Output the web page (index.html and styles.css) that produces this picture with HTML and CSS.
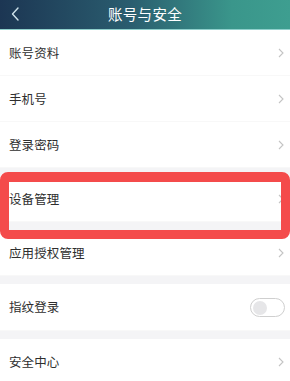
FILE: index.html
```html
<!DOCTYPE html>
<html lang="zh-CN">
<head>
<meta charset="utf-8">
<title>账号与安全</title>
<link rel="stylesheet" href="styles.css">
</head>
<body>
<div class="page">
  <header class="topbar">
    <svg class="back" width="8" height="14" viewBox="0 0 8 14"><path d="M7 1 L1.5 7 L7 13" fill="none" stroke="#cfe3ea" stroke-width="1.4" stroke-linecap="round" stroke-linejoin="round"/></svg>
    <h1 class="title">账号与安全</h1>
  </header>

  <section class="group">
    <div class="row"><span class="label">账号资料</span><svg class="chev" width="6" height="10" viewBox="0 0 6 10"><path d="M1 1 L5 5 L1 9" fill="none" stroke="#c4c4c4" stroke-width="1.1"/></svg></div>
    <div class="row"><span class="label">手机号</span><svg class="chev" width="6" height="10" viewBox="0 0 6 10"><path d="M1 1 L5 5 L1 9" fill="none" stroke="#c4c4c4" stroke-width="1.1"/></svg></div>
    <div class="row"><span class="label">登录密码</span><svg class="chev" width="6" height="10" viewBox="0 0 6 10"><path d="M1 1 L5 5 L1 9" fill="none" stroke="#c4c4c4" stroke-width="1.1"/></svg></div>
  </section>

  <section class="group">
    <div class="row"><span class="label">设备管理</span><svg class="chev" width="6" height="10" viewBox="0 0 6 10"><path d="M1 1 L5 5 L1 9" fill="none" stroke="#c4c4c4" stroke-width="1.1"/></svg></div>
  </section>

  <section class="group">
    <div class="row"><span class="label">应用授权管理</span><svg class="chev" width="6" height="10" viewBox="0 0 6 10"><path d="M1 1 L5 5 L1 9" fill="none" stroke="#c4c4c4" stroke-width="1.1"/></svg></div>
  </section>

  <section class="group">
    <div class="row tall"><span class="label">指纹登录</span><span class="toggle"><span class="knob"></span></span></div>
  </section>

  <section class="group last">
    <div class="row"><span class="label">安全中心</span><svg class="chev" width="6" height="10" viewBox="0 0 6 10"><path d="M1 1 L5 5 L1 9" fill="none" stroke="#c4c4c4" stroke-width="1.1"/></svg></div>
  </section>

  <div class="highlight"></div>
</div>
</body>
</html>
```

FILE: styles.css
```css
html, body {
  margin: 0;
  padding: 0;
  background: #f4f4f6;
}
body {
  font-family: "Noto Sans CJK SC", "Noto Sans", sans-serif;
  color: #2e2e2e;
  overflow: hidden;
}
.page {
  position: relative;
  width: 290px;
  height: 381px;
  overflow: hidden;
}
.topbar {
  height: 29px;
  border-bottom: 1px solid #8fd0cc;
  background: linear-gradient(90deg, #1c3653 0%, #2a5d6f 45%, #3a968b 80%, #3e9e90 100%);
  display: flex;
  align-items: center;
  justify-content: center;
  position: relative;
}
.back {
  position: absolute;
  left: 11px;
  top: 7px;
}
.title {
  margin: 0;
  font-size: 14.5px;
  font-weight: 400;
  color: #fff;
  letter-spacing: 0.3px;
  line-height: 1;
  margin-top: -1px;
}
.group {
  background: #fff;
  margin-bottom: 8px;
}
.group.last {
  margin-bottom: 0;
}
.row {
  height: 46px;
  display: flex;
  align-items: center;
  justify-content: space-between;
  padding: 0 6px 0 9px;
  box-shadow: inset 0 -1px 0 #f8f8f8;
}
.row.tall {
  height: 47px;
}
.label {
  font-size: 12.5px;
  line-height: 1;
  letter-spacing: 0.1px;
}
.chev {
  display: block;
}
.toggle {
  width: 31px;
  height: 17px;
  border: 1px solid #cfcfcf;
  border-radius: 10px;
  background: #fff;
  display: flex;
  align-items: center;
  padding-left: 2px;
  box-sizing: content-box;
  margin-right: -1px;
}
.knob {
  width: 14px;
  height: 14px;
  border-radius: 50%;
  background: #e6e6e8;
}
.highlight {
  position: absolute;
  left: 0;
  top: 172px;
  width: 290px;
  height: 67px;
  box-sizing: border-box;
  border: 9px solid #f44b4b;
  border-top-width: 10px;
  border-radius: 8px;
}
```
